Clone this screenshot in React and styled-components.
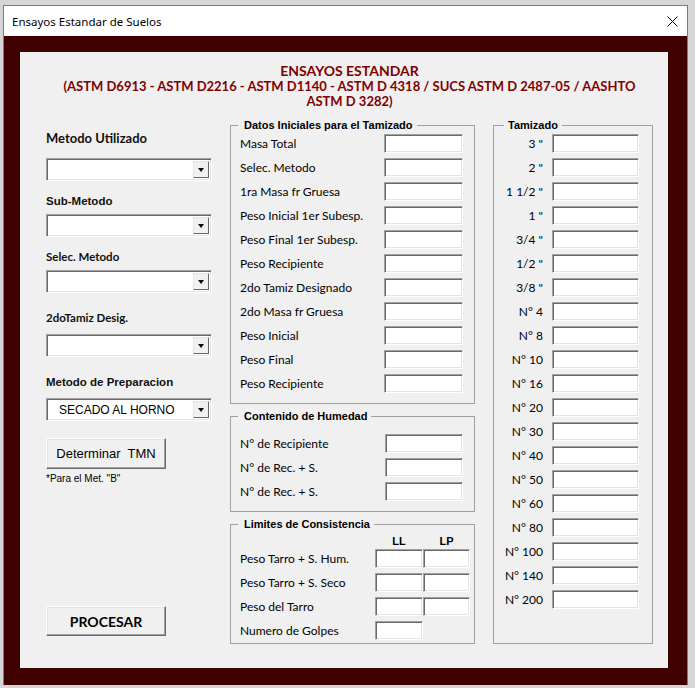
import React from 'react'
import styled, { createGlobalStyle } from 'styled-components'

const GlobalStyle = createGlobalStyle`
  html, body {
    margin: 0;
    padding: 0;
  }
  body {
    background: #d6d6d6;
    font-family: 'Liberation Sans', Arial, sans-serif;
    overflow: hidden;
  }
`

const Desktop = styled.div`
  width: 695px;
  height: 688px;
  padding: 5px 0 0 3px;
  box-sizing: border-box;
`

const Window = styled.div`
  width: 685px;
  border: 1px solid #7a7a7a;
  border-bottom: none;
  box-sizing: border-box;
  background: #400000;
`

const TitleBar = styled.div`
  height: 30px;
  background: #fff;
  display: flex;
  align-items: center;
  justify-content: space-between;
  padding-left: 8px;
  font-family: 'Noto Sans', sans-serif;
  font-size: 11.5px;
  color: #000;
`

const CloseBox = styled.div`
  width: 30px;
  height: 30px;
  display: flex;
  align-items: center;
  justify-content: center;
`

const Frame = styled.div`
  padding: 16px 19px 17px 16px;
`

const Panel = styled.div`
  width: 648px;
  height: 616px;
  box-sizing: border-box;
  background: #f0f0f0;
  padding: 11px 15px 0 26px;
`

const Heading = styled.div`
  text-align: center;
  font-family: Lato, 'Open Sans', sans-serif;
  font-weight: 700;
  line-height: 15.5px;
  color: #800000;
`

const HeadLine = styled.div`
  white-space: nowrap;
  font-size: ${p => p.$size}px;
`

const Columns = styled.div`
  display: grid;
  grid-template-columns: 166px 245px 160px;
  column-gap: 18px;
  margin-top: 9.5px;
`

const LeftCol = styled.div`
  display: flex;
  flex-direction: column;
  align-items: flex-start;
`

const SideLabel = styled.div`
  font-family: ${p => (p.$arial ? "'Liberation Sans', Arial" : 'Lato')}, sans-serif;
  font-weight: 700;
  font-size: ${p => p.$size || 11.5}px;
  line-height: 14px;
  color: #111;
  margin-top: ${p => p.$mt}px;
  white-space: nowrap;
`

const Combo = styled.div`
  width: 166px;
  height: 23px;
  box-sizing: border-box;
  display: flex;
  background: #fff;
  border: 1px solid;
  border-color: #a0a0a0 #fff #fff #a0a0a0;
  box-shadow: inset 1px 1px 0 #696969, inset -1px -1px 0 #e3e3e3;
  padding: 2px;
  margin-top: ${p => p.$mt}px;
`

const ComboText = styled.span`
  flex: 1;
  align-self: center;
  padding-left: 10px;
  font-family: 'Liberation Sans', Arial, sans-serif;
  font-size: 12px;
  color: #000;
`

const ComboButton = styled.span`
  width: 16px;
  box-sizing: border-box;
  background: #f0f0f0;
  border: 1px solid;
  border-color: #e3e3e3 #696969 #696969 #e3e3e3;
  display: flex;
  align-items: center;
  justify-content: center;
`

const Arrow = styled.span`
  width: 0;
  height: 0;
  border-left: 3.5px solid transparent;
  border-right: 3.5px solid transparent;
  border-top: 4px solid #000;
`

const Button = styled.button`
  width: 120px;
  height: ${p => p.$h}px;
  margin-top: ${p => p.$mt};
  margin-bottom: ${p => p.$mb || 0}px;
  box-sizing: border-box;
  padding: 0;
  background: #f0f0f0;
  border: 1px solid;
  border-color: #fff #696969 #696969 #fff;
  box-shadow: inset -1px -1px 0 #a0a0a0, inset 1px 1px 0 #e3e3e3;
  color: #000;
  white-space: pre;
  font-family: ${p => (p.$gill ? 'Lato' : "'Liberation Sans', Arial")}, sans-serif;
  font-weight: ${p => (p.$gill ? 700 : 400)};
  font-size: ${p => p.$size}px;
`

const Note = styled.div`
  margin-top: 4px;
  font-family: 'Liberation Sans', Arial, sans-serif;
  font-size: 10px;
  line-height: 12px;
  color: #000;
`

const MidCol = styled.div`
  display: flex;
  flex-direction: column;
  gap: 6px;
`

const Group = styled.fieldset`
  margin: 0;
  min-width: 0;
  border: 1px solid #a0a0a0;
  padding: ${p => p.$pad};
`

const Caption = styled.legend`
  font-family: 'Liberation Sans', Arial, sans-serif;
  font-weight: 700;
  font-size: 11px;
  line-height: 12px;
  padding: 0 4px 0 ${p => p.$pl}px;
  margin-left: ${p => p.$ml}px;
  color: #000;
`

const Rows = styled.div`
  display: flex;
  flex-direction: column;
  gap: 5px;
`

const Row = styled.div`
  display: grid;
  grid-template-columns: ${p => p.$cols};
  column-gap: ${p => p.$gap || 0}px;
  align-items: center;
  height: 19px;
`

const RowLabel = styled.span`
  font-family: Lato, 'Open Sans', sans-serif;
  font-size: 12px;
  color: #000;
  white-space: nowrap;
  text-align: ${p => (p.$right ? 'right' : 'left')};
`

const HeadRow = styled.div`
  display: grid;
  grid-template-columns: 1fr 48px 47px;
  height: 12px;
  margin-bottom: 2px;
  font-family: 'Liberation Sans', Arial, sans-serif;
  font-weight: 700;
  font-size: 11px;
  line-height: 12px;
  color: #000;
  text-align: center;
`

const Box = styled.input`
  width: 100%;
  height: 19px;
  box-sizing: border-box;
  margin: 0;
  padding: 0;
  background: #fff;
  border: 1px solid;
  border-color: #a0a0a0 #fff #fff #a0a0a0;
  box-shadow: inset 1px 1px 0 #696969, inset -1px -1px 0 #e3e3e3;
  outline: none;
`

const datos = [
  'Masa Total',
  'Selec. Metodo',
  '1ra Masa fr Gruesa',
  'Peso Inicial 1er Subesp.',
  'Peso Final 1er Subesp.',
  'Peso Recipiente',
  '2do Tamiz Designado',
  '2do Masa fr Gruesa',
  'Peso Inicial',
  'Peso Final',
  'Peso Recipiente',
]

const humedad = ['N° de Recipiente', 'N° de Rec. + S.', 'N° de Rec. + S.']

const limites = [
  ['Peso Tarro + S. Hum.', 2],
  ['Peso Tarro + S. Seco', 2],
  ['Peso del Tarro', 2],
  ['Numero de Golpes', 1],
]

const tamices = [
  '3 "', '2 "', '1 1/2 "', '1 "', '3/4 "', '1/2 "', '3/8 "',
  'N° 4', 'N° 8', 'N° 10', 'N° 16', 'N° 20', 'N° 30', 'N° 40',
  'N° 50', 'N° 60', 'N° 80', 'N° 100', 'N° 140', 'N° 200',
]

const Select = ({ mt, value }) => (
  <Combo $mt={mt}>
    <ComboText>{value}</ComboText>
    <ComboButton>
      <Arrow />
    </ComboButton>
  </Combo>
)

const App = () => {
  return (
    <>
      <GlobalStyle />
      <Desktop>
        <Window>
          <TitleBar>
            <span>Ensayos Estandar de Suelos</span>
            <CloseBox>
              <svg width="11" height="11" viewBox="0 0 11 11">
                <path d="M0.5 0.5 L10.5 10.5 M10.5 0.5 L0.5 10.5" stroke="#000" strokeWidth="1" fill="none" />
              </svg>
            </CloseBox>
          </TitleBar>
          <Frame>
            <Panel>
              <Heading>
                <HeadLine $size={14}>ENSAYOS ESTANDAR</HeadLine>
                <HeadLine $size={13}>(ASTM D6913 - ASTM D2216 - ASTM D1140 - ASTM D 4318 / SUCS ASTM D 2487-05 / AASHTO</HeadLine>
                <HeadLine $size={13}>ASTM D 3282)</HeadLine>
              </Heading>

              <Columns>
                <LeftCol>
                  <SideLabel $mt={12} $size={13}>Metodo Utilizado</SideLabel>
                  <Select mt={13} />
                  <SideLabel $mt={13} $arial>Sub-Metodo</SideLabel>
                  <Select mt={6} />
                  <SideLabel $mt={13}>Selec. Metodo</SideLabel>
                  <Select mt={6} />
                  <SideLabel $mt={18}>2doTamiz Desig.</SideLabel>
                  <Select mt={9} />
                  <SideLabel $mt={18} $arial>Metodo de Preparacion</SideLabel>
                  <Select mt={9} value="SECADO AL HORNO" />
                  <Button $h={31} $mt="17px" $size={13}>Determinar  TMN</Button>
                  <Note>*Para el Met. "B"</Note>
                  <Button $h={30} $mt="auto" $mb={8} $size={14} $gill>PROCESAR</Button>
                </LeftCol>

                <MidCol>
                  <Group $pad="3px 11px 10px 9px">
                    <Caption $ml={-2} $pl={6}>Datos Iniciales para el Tamizado</Caption>
                    <Rows>
                      {datos.map((d, i) => (
                        <Row key={i} $cols="1fr 79px">
                          <RowLabel>{d}</RowLabel>
                          <Box readOnly />
                        </Row>
                      ))}
                    </Rows>
                  </Group>

                  <Group $pad="12px 11px 10px 9px">
                    <Caption $ml={-2} $pl={6}>Contenido de Humedad</Caption>
                    <Rows>
                      {humedad.map((d, i) => (
                        <Row key={i} $cols="1fr 78px">
                          <RowLabel>{d}</RowLabel>
                          <Box readOnly />
                        </Row>
                      ))}
                    </Rows>
                  </Group>

                  <Group $pad="5px 4px 3px 9px">
                    <Caption $ml={-2} $pl={6}>Limites de Consistencia</Caption>
                    <HeadRow>
                      <span />
                      <span>LL</span>
                      <span>LP</span>
                    </HeadRow>
                    <Rows>
                      {limites.map(([d, n], i) => (
                        <Row key={i} $cols="1fr 48px 47px">
                          <RowLabel>{d}</RowLabel>
                          <Box readOnly />
                          {n > 1 ? <Box readOnly /> : <span />}
                        </Row>
                      ))}
                    </Rows>
                  </Group>
                </MidCol>

                <Group $pad="3px 13px 34px 10px">
                  <Caption $ml={0} $pl={4}>Tamizado</Caption>
                  <Rows>
                    {tamices.map((t, i) => (
                      <Row key={i} $cols="39px 87px" $gap={9}>
                        <RowLabel $right>{t}</RowLabel>
                        <Box readOnly />
                      </Row>
                    ))}
                  </Rows>
                </Group>
              </Columns>
            </Panel>
          </Frame>
        </Window>
      </Desktop>
    </>
  )
}

export default App
